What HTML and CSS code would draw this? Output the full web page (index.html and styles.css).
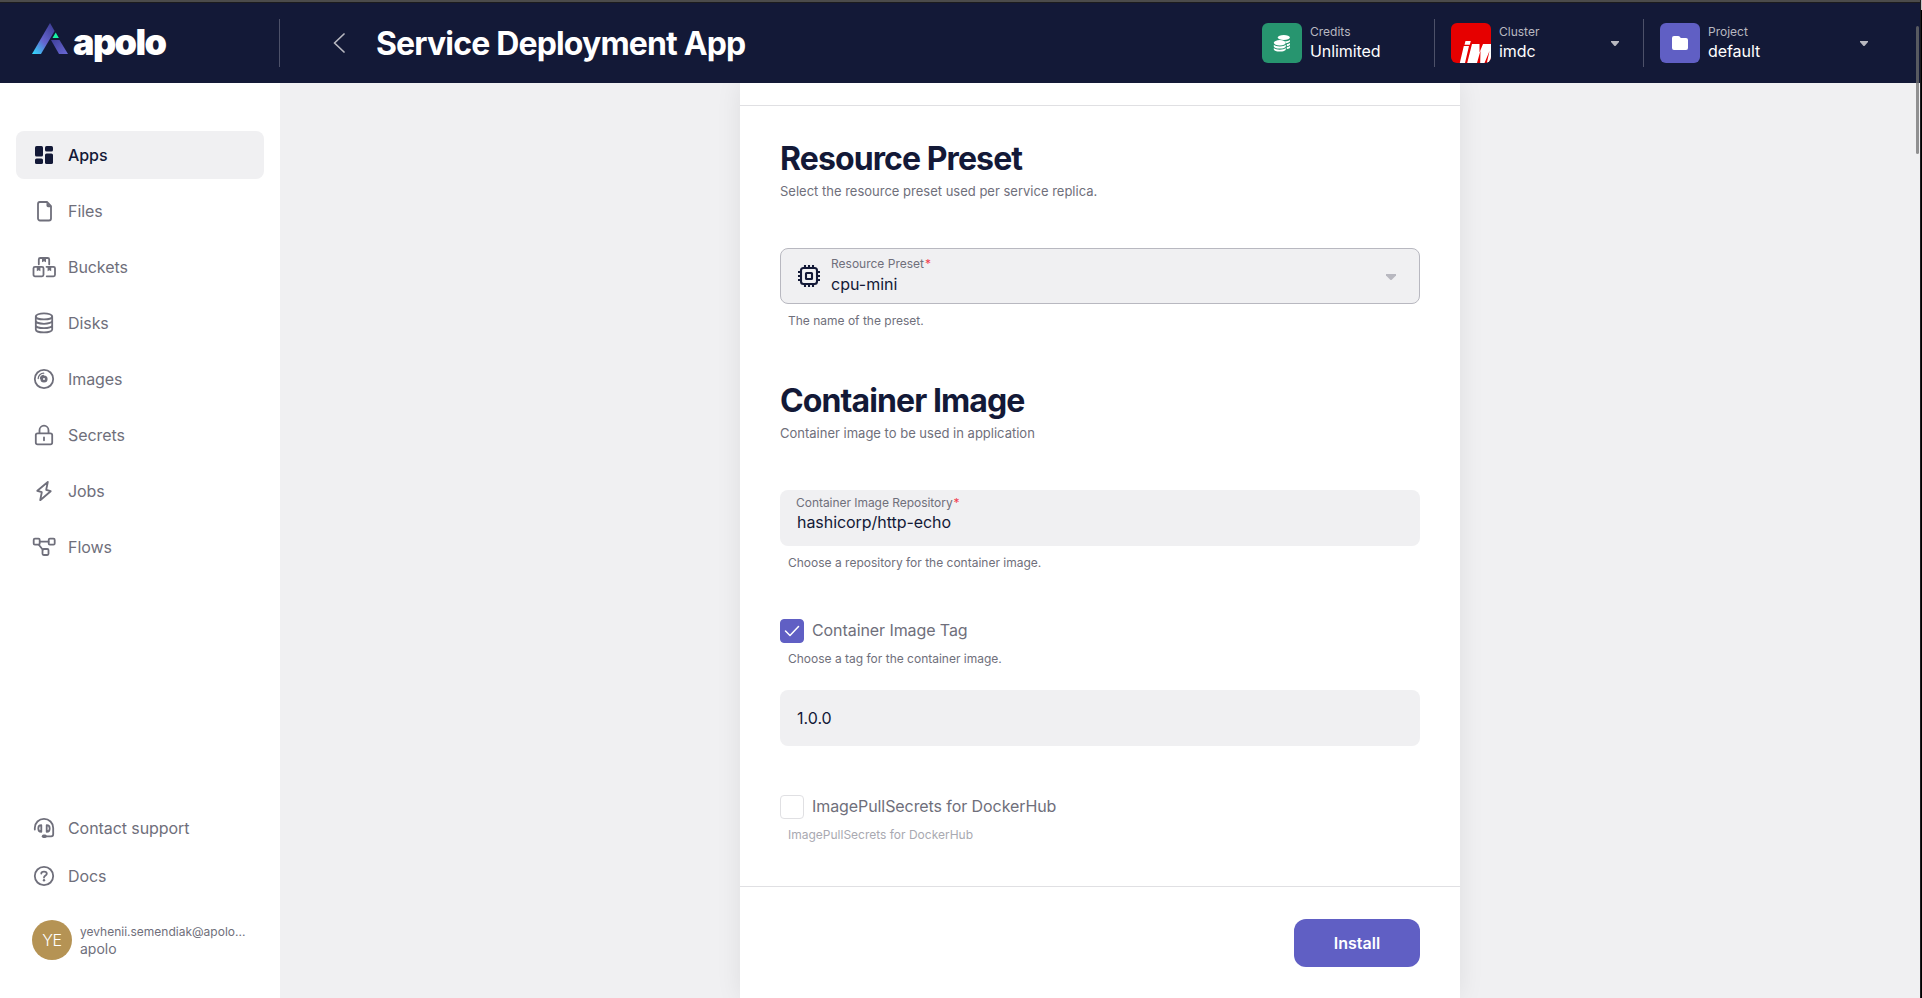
FILE: index.html
```html
<!DOCTYPE html>
<html lang="en">
<head>
<meta charset="utf-8">
<title>Service Deployment App</title>
<link rel="stylesheet" href="styles.css">
</head>
<body>
<div class="app">
  <header class="header">
    <div class="brand">
      <svg class="brand-mark" width="36" height="31" viewBox="0 0 36 31">
        <defs>
          <linearGradient id="leg" x1="0" y1="1" x2="0.75" y2="0"><stop offset="0" stop-color="#2fe0ff"/><stop offset=".5" stop-color="#6564cf"/><stop offset="1" stop-color="#40409a"/></linearGradient>
          <linearGradient id="foot" x1="0" y1="0" x2="1" y2="1"><stop offset="0" stop-color="#40409a"/><stop offset="1" stop-color="#6968d6"/></linearGradient>
        </defs>
        <path fill="url(#leg)" d="M18 0l4.6 8L9 31H0z"/>
        <path fill="#17f3a4" d="M23.7 9.6l3.2 5.4h-6.4z"/>
        <path fill="url(#foot)" d="M19 17h8.5L36 31h-9z"/>
      </svg>
      <span class="brand-name">apolo</span>
    </div>
    <div class="title-bar">
      <svg class="back" width="12" height="20" viewBox="0 0 12 20"><path d="M11 1L1.5 10 11 19"/></svg>
      <h1 class="page-title">Service Deployment App</h1>
    </div>
    <div class="chip credits">
      <span class="chip-icon green">
        <svg width="20" height="20" viewBox="0 0 20 20" fill="#fff">
          <ellipse cx="11.8" cy="4.4" rx="6" ry="2.5"/>
          <path d="M13 8.3c2 0 4-.5 5-1.4v1.2c0 1-1.600 1.800-3.600 2.100zM14.800 11.200c1.300-.2 2.400-.6 3.200-1.200v1.200c0 1-1.400 1.700-3.200 2zM14.800 14.300c1.300-.2 2.400-.6 3.200-1.200v1.200c0 1-1.400 1.600-3.200 1.900z"/>
          <ellipse cx="7.800" cy="9.800" rx="6" ry="2.700"/>
          <path d="M1.800 11.800c1.300 1.200 3.500 1.700 6 1.700s4.700-.5 6-1.700v1.400c0 1.400-2.700 2.300-6 2.300s-6-.9-6-2.300zM1.800 15c1.300 1.200 3.500 1.700 6 1.700s4.700-.5 6-1.700v1.200c0 1.400-2.700 2.400-6 2.400s-6-1-6-2.400z"/>
        </svg>
      </span>
      <span class="chip-text"><small>Credits</small><b>Unlimited</b></span>
    </div>
    <div class="chip cluster">
      <span class="chip-icon red">
        <svg width="40" height="40" viewBox="0 0 40 40" fill="#fff">
          <path d="M14.500 18h5.300l-1 3.700h-5.300zM12.800 23H18l-4 17H8.800zM21 21h7.500v8.500L32 21h8v19h-4.200l2.700-12-5 12h-4.300l.3-12.500L26 40h-9.800z"/>
        </svg>
      </span>
      <span class="chip-text"><small>Cluster</small><b>imdc</b></span>
      <svg class="caret" width="8" height="5" viewBox="0 0 8 5"><path d="M0 0h8v1L4.500 5h-1L0 1z"/></svg>
    </div>
    <div class="chip project">
      <span class="chip-icon violet">
        <svg width="18" height="16" viewBox="0 0 18 16"><path fill="#fff" d="M3 1h4.200c.6 0 1 .2 1.400.6L9.800 3H15a2 2 0 0 1 2 2v8a2 2 0 0 1-2 2H3a2 2 0 0 1-2-2V3a2 2 0 0 1 2-2z"/></svg>
      </span>
      <span class="chip-text"><small>Project</small><b>default</b></span>
      <svg class="caret" width="8" height="5" viewBox="0 0 8 5"><path d="M0 0h8v1L4.500 5h-1L0 1z"/></svg>
    </div>
  </header>
  <div class="body">
    <aside class="sidebar">
      <nav class="nav">
        <a class="nav-item active"><svg class="icon solid" viewBox="0 0 24 24"><rect x="3" y="3" width="8" height="10.500" rx="1.600"/><rect x="13" y="3" width="8" height="5.500" rx="1.600"/><rect x="3" y="15.500" width="8" height="5.500" rx="1.600"/><rect x="13" y="10.500" width="8" height="10.500" rx="1.600"/></svg>Apps</a>
        <a class="nav-item"><svg class="icon" viewBox="0 0 24 24"><path d="M7.800 3h7.400L19 7v12.500a2 2 0 0 1-2 2H8a2 2 0 0 1-2-2V5a2 2 0 0 1 1.800-2z"/><path class="fill" d="M14.500 3l5 5.200h-3.400a1.600 1.600 0 0 1-1.600-1.600z"/></svg>Files</a>
        <a class="nav-item"><svg class="icon" viewBox="0 0 24 24"><path d="M6.800 9.300V4.500a1.500 1.500 0 0 1 1.500-1.500h7.400a1.500 1.500 0 0 1 1.500 1.500v4.800M10 21.300H3a1.500 1.500 0 0 1-1.500-1.500v-6.500a1.500 1.500 0 0 1 1.500-1.500h7a1.500 1.500 0 0 1 1.500 1.500v6.500a1.500 1.500 0 0 1-1.500 1.500M14.500 11.800h7a1.500 1.500 0 0 1 1.500 1.500v6.500a1.500 1.500 0 0 1-1.500 1.500h-6.800"/><path class="fill" d="M10 3h4v4.300l-2-1.100-2 1.100zM4.800 12h3.600v4.200l-1.800-1-1.800 1zM15.600 12h3.600v4.200l-1.800-1-1.800 1z"/></svg>Buckets</a>
        <a class="nav-item"><svg class="icon" viewBox="0 0 24 24"><ellipse cx="12" cy="5.400" rx="8.200" ry="3"/><path d="M3.800 5.400v13c0 1.700 3.700 3 8.200 3s8.200-1.300 8.200-3v-13M3.800 9.800c0 1.700 3.700 3 8.200 3s8.200-1.300 8.200-3M3.800 14.200c0 1.700 3.700 3 8.200 3s8.200-1.300 8.200-3"/></svg>Disks</a>
        <a class="nav-item"><svg class="icon" viewBox="0 0 24 24"><circle cx="12" cy="12" r="9.200"/><circle cx="12" cy="12" r="2.300" stroke-width="2.600"/><path stroke-width="1.300" d="M6.200 11.500a5.500 5.500 0 0 1 5.500-5.300M8.500 11.500a3.300 3.300 0 0 1 2.800-3"/></svg>Images</a>
        <a class="nav-item"><svg class="icon" viewBox="0 0 24 24"><rect x="3.800" y="10.300" width="16.400" height="11" rx="1.800"/><path d="M7.500 10V7.200a4.500 4.500 0 0 1 9 0V10M12 14.300v3"/></svg>Secrets</a>
        <a class="nav-item"><svg class="icon" viewBox="0 0 24 24"><path d="M15.800 3L5.300 11.800l4.500 1.400L8.200 21.200 18.700 12.200l-4.500-1.400z"/></svg>Jobs</a>
        <a class="nav-item"><svg class="icon" viewBox="0 0 24 24"><rect x="1.700" y="3.700" width="6" height="6" rx="1.200"/><rect x="16.700" y="3.700" width="6" height="6" rx="1.200"/><rect x="10.500" y="14" width="6" height="6" rx="1.200"/><path d="M8 6.700h8.500M6.800 9.700l4 5"/></svg>Flows</a>
      </nav>
      <div class="side-foot">
        <a class="nav-item"><svg class="icon" viewBox="0 0 24 24"><path d="M2.800 13.500V12a9.200 9.200 0 0 1 18.400 0v6.300a2 2 0 0 1-2 2H12"/><path d="M9.300 9.200v6.600c-2 0-3-1.200-3-3.300s1-3.300 3-3.300zM14.700 9.200v6.600c2 0 3-1.200 3-3.300s-1-3.300-3-3.300z"/><rect class="fill" x="9.800" y="18.500" width="5" height="3.500" rx="1.700"/></svg>Contact support</a>
        <a class="nav-item"><svg class="icon" viewBox="0 0 24 24"><circle cx="12" cy="12" r="9.200"/><path d="M9.300 9.500C9.300 8.200 10.500 7.700 12 7.700s2.800.7 2.800 2c0 1.800-2.800 1.700-2.800 3.800"/><circle class="fill" cx="12" cy="16.300" r="1.200"/></svg>Docs</a>
        <div class="user">
          <span class="avatar">YE</span>
          <span class="user-text"><span class="mail">yevhenii.semendiak@apolo...</span><span class="org">apolo</span></span>
        </div>
      </div>
    </aside>
    <main class="main">
      <section class="panel">
        <div class="panel-top"></div>
        <form class="form">
          <h2 class="heading">Resource Preset</h2>
          <p class="sub">Select the resource preset used per service replica.</p>
          <div class="field select">
            <svg class="cpu" width="24" height="24" viewBox="0 0 24 24"><rect x="4" y="4" width="16" height="16" rx="2.500"/><rect x="9" y="9" width="6" height="6" rx=".5"/><path d="M8 1v3M12 1v3M16 1v3M8 20v3M12 20v3M16 20v3M1 8h3M1 12h3M1 16h3M20 8h3M20 12h3M20 16h3"/></svg>
            <span class="field-text"><label>Resource Preset<i>*</i></label><span class="value">cpu-mini</span></span>
            <svg class="arrow" width="10" height="6" viewBox="0 0 10 6"><path d="M0 0h10v1.500L5.500 6h-1L0 1.500z"/></svg>
          </div>
          <p class="help">The name of the preset.</p>

          <h2 class="heading second">Container Image</h2>
          <p class="sub">Container image to be used in application</p>
          <div class="field">
            <span class="field-text text-input"><label>Container Image Repository<i>*</i></label><span class="value">hashicorp/http-echo</span></span>
          </div>
          <p class="help">Choose a repository for the container image.</p>

          <div class="check-row"><span class="box checked"><svg width="16" height="12" viewBox="0 0 16 12"><path d="M1.500 6l4.500 4.500 8.500-9"/></svg></span><span class="check-label">Container Image Tag</span></div>
          <p class="help tight">Choose a tag for the container image.</p>
          <div class="field plain"><span class="value">1.0.0</span></div>

          <div class="check-row last"><span class="box"></span><span class="check-label">ImagePullSecrets for DockerHub</span></div>
          <p class="help tight faded">ImagePullSecrets for DockerHub</p>
        </form>
        <div class="actions"><button class="install" type="button">Install</button></div>
      </section>
    </main>
  </div>
  <div class="thumb"></div>
  <div class="edge"></div>
</div>
</body>
</html>
```
FILE: styles.css
```css
* { box-sizing: border-box; }
body { margin: 0; font-family: Inter, "Liberation Sans", sans-serif; font-size: 16px; color: #131937; overflow: hidden; }
h1, h2, p { margin: 0; }
.app { position: relative; height: 998px; display: flex; flex-direction: column; background: #f0f0f2; }

.header { flex: none; height: 83px; padding-top: 3px; background: #131937; display: flex; align-items: center; color: #fff;
  background-image: linear-gradient(#4b4b4b 0 2px, #1c1c1e 2px 3px, transparent 3px); }
.brand { width: 280px; height: 48px; padding-left: 32px; display: flex; align-items: center; gap: 5px; border-right: 1px solid #4d5169; }
.brand-mark { margin-top: -9px; }
.brand-name { font-weight: 900; font-size: 36px; line-height: 40px; letter-spacing: -1.6px; margin-top: -3px; }
.title-bar { flex: 1; display: flex; align-items: center; padding-left: 53px; gap: 31px; }
.back { fill: none; stroke: #b8b8c0; stroke-width: 1.7; stroke-linecap: round; stroke-linejoin: round; }
.page-title { font-size: 32px; line-height: 40px; font-weight: 650; letter-spacing: -0.84px; padding-top: 2px; }
.chip { height: 48px; display: flex; align-items: center; gap: 8px; }
.credits { width: 172px; }
.cluster, .project { border-left: 1px solid #4d5169; padding-left: 16px; }
.cluster { width: 209px; }
.project { width: 279px; }
.chip-icon { width: 40px; height: 40px; border-radius: 6px; display: grid; place-items: center; overflow: hidden; }
.green { background: #27956f; }
.red { background: #e60000; }
.violet { background: #605fc4; }
.chip-text { display: flex; flex-direction: column; flex: 1; padding-top: 1px; }
.chip-text small { font-size: 12px; line-height: 16px; color: #b8b8c0; }
.chip-text b { font-size: 16px; line-height: 23px; font-weight: 400; letter-spacing: -0.07px; }
.caret { fill: #b8b8c0; }
.cluster .caret { margin-right: 24px; }
.project .caret { margin-right: 54px; }

.body { flex: 1; display: flex; min-height: 0; }
.sidebar { width: 280px; background: #fff; padding: 48px 16px 38px; display: flex; flex-direction: column; justify-content: space-between; }
.nav { display: flex; flex-direction: column; gap: 8px; }
.nav-item { height: 48px; padding-left: 16px; display: flex; align-items: center; gap: 12px; border-radius: 8px; color: #6f6f7b; letter-spacing: -0.07px; }
.nav-item.active { background: #f0f0f2; color: #131937; font-weight: 500; }
.icon { width: 24px; height: 24px; fill: none; stroke: #6f6f7b; stroke-width: 1.8; stroke-linecap: round; stroke-linejoin: round; }
.icon.solid { fill: #131937; stroke: none; }
.fill { fill: #6f6f7b; stroke: none; }
.user { display: flex; align-items: center; gap: 8px; padding: 20px 0 0 16px; }
.avatar { width: 40px; height: 40px; border-radius: 50%; background: #b59354; color: #fff; display: grid; place-items: center; font-size: 16px; font-weight: 300; letter-spacing: -0.3px; }
.user-text { display: flex; flex-direction: column; color: #6f6f7b; padding-top: 2px; }
.mail { font-size: 12px; line-height: 16px; }
.org { font-size: 14px; line-height: 18px; }

.main { flex: 1; display: flex; justify-content: center; padding-right: 2px; overflow: hidden; }
.panel { width: 720px; background: #fff; box-shadow: 0 0 24px rgba(0, 0, 0, .08); }
.panel-top { height: 23px; border-bottom: 1px solid #e0e0e3; }
.form { height: 781px; padding: 33px 40px 0; border-bottom: 1px solid #e0e0e3; }
.heading { font-size: 32px; line-height: 40px; font-weight: 700; letter-spacing: -0.9px; }
.heading.second { margin-top: 52px; }
.sub { font-size: 13px; line-height: 20px; margin: 2px 0 47px; color: #6f6f7b; }
.field { height: 56px; border-radius: 8px; background: #f0f0f2; display: flex; align-items: center; padding: 0 16px; }
.field.select { border: 1px solid #b8b8c0; gap: 10px; }
.field-text { display: flex; flex-direction: column; flex: 1; }
.field label { font-size: 12px; line-height: 16px; color: #6f6f7b; }
.field label i { color: #f23d4f; font-style: normal; margin-left: 1px; }
.value { line-height: 24px; }
.cpu { fill: none; stroke: #131937; stroke-width: 2.1; }
.arrow { fill: #b8b8c0; margin: 1px 7px 0 0; }
.text-input { padding-bottom: 8px; }
.text-input label { letter-spacing: -0.04px; }
.text-input .value { line-height: 23px; padding-left: 1px; letter-spacing: -0.05px; }
.help { font-size: 12px; line-height: 16px; margin: 9px 0 0 8px; color: #6f6f7b; }
.check-row { display: flex; align-items: center; gap: 8px; margin-top: 48px; color: #6f6f7b; line-height: 24px; }
.check-row.last { margin-top: 49px; }
.check-label { height: 24px; line-height: 22px; letter-spacing: -0.08px; }
.box { width: 24px; height: 24px; border: 1px solid #e0e0e3; border-radius: 4px; display: grid; place-items: center; }
.box.checked { background: #605fc4; border-color: #605fc4; }
.box svg { fill: none; stroke: #fff; stroke-width: 1.5; stroke-linecap: round; stroke-linejoin: round; }
.help.tight { margin-top: 8px; }
.plain { margin-top: 23px; padding-left: 17px; }
.faded { color: #a9a9b1; }
.actions { display: flex; justify-content: flex-end; padding: 32px 40px; }
.install { width: 126px; height: 48px; border: 0; border-radius: 12px; background: #605fc4; color: #fff; font: 600 16px/24px Inter, sans-serif; }

.thumb { position: absolute; left: 1916px; top: 26px; width: 3px; height: 128px; background: rgba(112, 112, 112, .75); border-radius: 2px; }
.edge { position: absolute; right: 0; top: 0; width: 2px; height: 998px; border-left: 1px solid #1c1c1e; background: linear-gradient(#c4c4c4 0 10px, #000 10px); }
```
